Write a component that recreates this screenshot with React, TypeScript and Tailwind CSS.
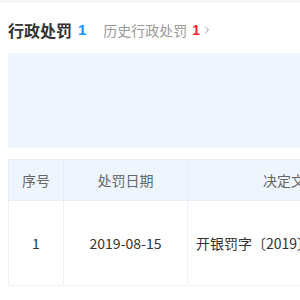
import { ChevronRight } from 'lucide-react'

const font = { fontFamily: '"Noto Sans CJK SC", "Liberation Sans", sans-serif' }

export default function App() {
  return (
    <div className="w-[300px] h-[300px] bg-white overflow-hidden" style={font}>
      <div className="h-[3px] bg-[#f5f6f7]" />
      <div className="flex items-center pl-2 pt-4 h-[38px] whitespace-nowrap">
        <span className="text-[16px] font-bold text-[#333] leading-[22px]">行政处罚</span>
        <span className="ml-[6px] text-[15px] font-bold text-[#1890ff] leading-[22px]" style={{ fontFamily: '"Liberation Sans", sans-serif' }}>1</span>
        <span className="ml-[17px] text-[14px] text-[#999] leading-[22px]">历史行政处罚</span>
        <span className="ml-[5px] text-[14px] font-bold text-[#f5222d] leading-[22px]" style={{ fontFamily: '"Liberation Sans", sans-serif' }}>1</span>
        <ChevronRight className="w-[12px] h-[12px] text-[#999] ml-[1px]" strokeWidth={2} />
      </div>
      <div className="ml-2 mt-3 h-[95px] bg-[#eef5fc]" />
      <table className="ml-2 mt-[11px] border-collapse table-fixed w-[400px] text-[14px]">
        <colgroup>
          <col className="w-[55px]" />
          <col className="w-[124px]" />
          <col className="w-[221px]" />
        </colgroup>
        <thead>
          <tr className="h-[41px] bg-[#eef5fc] text-[#666]">
            <th className="font-normal border border-[#e6eef7] text-center">序号</th>
            <th className="font-normal border border-[#e6eef7] text-center">处罚日期</th>
            <th className="font-normal border border-[#e6eef7] text-center">决定文书号</th>
          </tr>
        </thead>
        <tbody>
          <tr className="h-[85px] text-[#333]">
            <td className="border border-[#eef2f7] text-center">1</td>
            <td className="border border-[#eef2f7] text-center">2019-08-15</td>
            <td className="border border-[#eef2f7] px-2 whitespace-nowrap overflow-hidden">开银罚字〔2019〕12号</td>
          </tr>
        </tbody>
      </table>
    </div>
  )
}
